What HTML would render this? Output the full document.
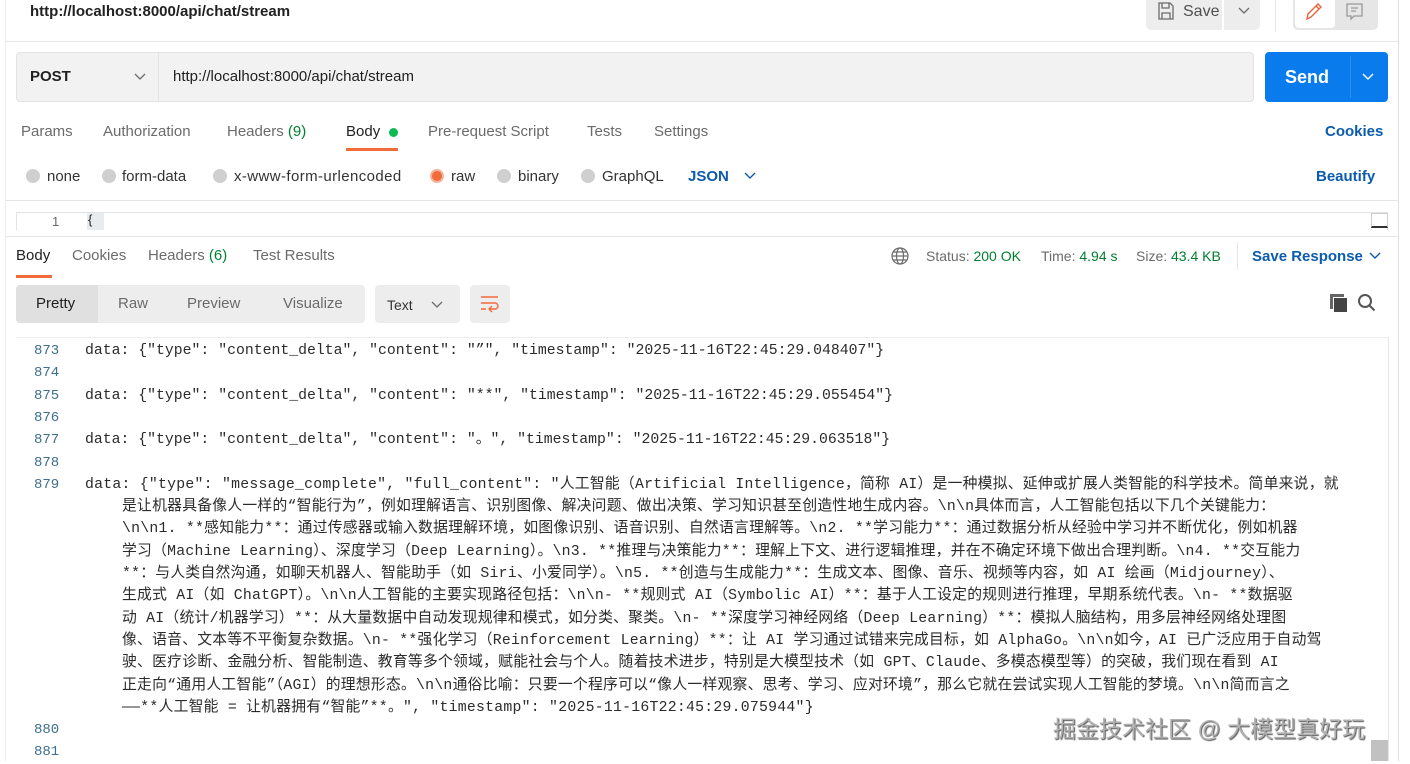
<!DOCTYPE html>
<html><head><meta charset="utf-8"><style>
*{margin:0;padding:0;box-sizing:border-box}
body{width:1410px;height:761px;overflow:hidden;background:#fff;font-family:"Liberation Sans","Noto Sans CJK SC",sans-serif;color:#212121;position:relative;font-size:15px}
.a{position:absolute;white-space:nowrap}
.g{color:#6b6b6b}
.blue{color:#0b5cad}
.gr{color:#007f31}
.radio{position:absolute;width:14px;height:14px;border-radius:50%;background:#cfcfcf;top:169px}
.code{position:absolute;left:0;top:340px;font-family:"Liberation Mono","Noto Sans CJK SC",monospace;font-size:14.8px;line-height:22.3px;color:#2b2b2b}
.ln{position:absolute;left:34px;width:28px;color:#3d6e8c;font-family:"Liberation Mono",monospace;font-size:14px}
.tx{position:absolute;left:85px;white-space:pre}
.tx2{position:absolute;left:122px;white-space:pre;letter-spacing:0.25px}
</style></head><body>
<div style="position:absolute;left:5px;top:0;width:1px;height:761px;background:#ececec"></div>
<div style="position:absolute;left:1398px;top:0;width:1px;height:761px;background:#e0e0e0"></div>
<div class="a" style="left:30px;top:3px;font-size:15px;font-weight:bold;color:#212121">http://localhost:8000/api/chat/stream</div>
<div style="position:absolute;left:1146px;top:0;width:114px;height:30px;background:#ededed;border-radius:0 0 5px 5px"></div>
<div style="position:absolute;left:1222px;top:0;width:2px;height:30px;background:#fff"></div>
<svg class="a" style="left:1157px;top:2px" width="18" height="18" viewBox="0 0 18 18" fill="none" stroke="#6b6b6b" stroke-width="1.3"><path d="M2 1h11l3 3v13H2z M5 1v5h7V1 M5 17v-6h8v6"/></svg>
<div class="a" style="left:1183px;top:3px;color:#505050;font-size:16px">Save</div>
<svg class="a" style="left:1238px;top:7px" width="12" height="8" fill="none" stroke="#6b6b6b" stroke-width="1.3"><path d="M1 1l5 5 5-5"/></svg>
<div style="position:absolute;left:1275px;top:0;width:1px;height:32px;background:#e6e6e6"></div>
<div style="position:absolute;left:1293px;top:0;width:85px;height:30px;background:#e6e6e6;border-radius:0 0 5px 5px"></div>
<div style="position:absolute;left:1295px;top:0;width:40px;height:28px;background:#fff;border-radius:0 0 4px 4px"></div>
<svg class="a" style="left:1304px;top:1px" width="20" height="20" fill="none" stroke="#e8663d" stroke-width="1.4"><path d="M3 18l1-5L14 3l3 3L7 16z M12 5l3 3"/></svg>
<svg class="a" style="left:1345px;top:2px" width="20" height="20" fill="none" stroke="#9a9a9a" stroke-width="1.3"><path d="M2 2h15v12H9l-3 3v-3H2z M6 6h7 M6 9h5"/></svg>
<div style="position:absolute;left:6px;top:41px;width:1392px;height:1px;background:#e6e6e6"></div>
<div style="position:absolute;left:16px;top:52px;width:1238px;height:50px;background:#f2f2f2;border:1px solid #e3e3e3;border-radius:4px"></div>
<div style="position:absolute;left:158px;top:53px;width:1px;height:48px;background:#e3e3e3"></div>
<div class="a" style="left:30px;top:68px;font-weight:bold;font-size:15px">POST</div>
<svg class="a" style="left:134px;top:73px" width="12" height="8" fill="none" stroke="#6b6b6b" stroke-width="1.3"><path d="M1 1l5 5 5-5"/></svg>
<div class="a" style="left:173px;top:68px;font-size:15px">http://localhost:8000/api/chat/stream</div>
<div style="position:absolute;left:1265px;top:52px;width:123px;height:50px;background:#097bed;border-radius:4px"></div>
<div style="position:absolute;left:1350px;top:56px;width:1px;height:42px;background:#2f8ff0"></div>
<div class="a" style="left:1285px;top:67px;font-size:18px;font-weight:bold;color:#fff">Send</div>
<svg class="a" style="left:1362px;top:73px" width="12" height="8" fill="none" stroke="#fff" stroke-width="1.4"><path d="M1 1l5 5 5-5"/></svg>
<div class="a g" style="left:21px;top:123px">Params</div>
<div class="a g" style="left:103px;top:123px">Authorization</div>
<div class="a g" style="left:227px;top:123px">Headers <span class="gr">(9)</span></div>
<div class="a" style="left:346px;top:123px;color:#212121">Body</div>
<div style="position:absolute;left:389px;top:128px;width:9px;height:9px;border-radius:50%;background:#0cbb52"></div>
<div style="position:absolute;left:346px;top:148px;width:52px;height:3px;background:#f26b3a"></div>
<div class="a g" style="left:428px;top:123px">Pre-request Script</div>
<div class="a g" style="left:587px;top:123px">Tests</div>
<div class="a g" style="left:654px;top:123px">Settings</div>
<div class="a blue" style="left:1325px;top:123px;font-weight:bold">Cookies</div>
<div class="radio" style="left:26px"></div><div class="a" style="left:47px;top:168px;color:#333">none</div>
<div class="radio" style="left:102px"></div><div class="a" style="left:122px;top:168px;color:#333">form-data</div>
<div class="radio" style="left:213px"></div><div class="a" style="left:234px;top:168px;color:#333;letter-spacing:0.4px">x-www-form-urlencoded</div>
<div class="radio" style="left:430px;background:#f26b3a;border:2px solid #f7b49a"></div><div class="a" style="left:451px;top:168px;color:#333">raw</div>
<div class="radio" style="left:497px"></div><div class="a" style="left:518px;top:168px;color:#333">binary</div>
<div class="radio" style="left:581px"></div><div class="a" style="left:602px;top:168px;color:#333">GraphQL</div>
<div class="a blue" style="left:688px;top:168px;font-weight:bold">JSON</div>
<svg class="a" style="left:744px;top:172px" width="12" height="8" fill="none" stroke="#0b5cad" stroke-width="1.4"><path d="M1 1l5 5 5-5"/></svg>
<div class="a blue" style="left:1316px;top:168px;font-weight:bold">Beautify</div>
<div style="position:absolute;left:6px;top:200px;width:1392px;height:1px;background:#e6e6e6"></div>
<div style="position:absolute;left:16px;top:212px;width:1372px;height:18px;border:1px solid #e3e3e3;border-bottom:none"></div>
<div class="a" style="left:52px;top:214px;font-size:13px;color:#666">1</div>
<div style="position:absolute;left:87px;top:213px;width:17px;height:17px;background:#e8ecef"></div>
<div class="a" style="left:88px;top:212px;font-size:13px">{</div>
<div style="position:absolute;left:1371px;top:213px;width:17px;height:15px;border:1px solid #ccc;border-bottom:2px solid #333"></div>
<div style="position:absolute;left:6px;top:236px;width:1392px;height:1px;background:#e6e6e6"></div>
<div class="a" style="left:16px;top:247px">Body</div>
<div style="position:absolute;left:16px;top:275px;width:36px;height:3px;background:#f26b3a"></div>
<div class="a g" style="left:72px;top:247px">Cookies</div>
<div class="a g" style="left:148px;top:247px">Headers <span class="gr">(6)</span></div>
<div class="a g" style="left:253px;top:247px">Test Results</div>
<svg class="a" style="left:891px;top:247px" width="18" height="18" fill="none" stroke="#6b6b6b" stroke-width="1.2"><circle cx="9" cy="9" r="8"/><ellipse cx="9" cy="9" rx="3.5" ry="8"/><path d="M1 9h16M2.5 5h13M2.5 13h13"/></svg>
<div class="a g" style="left:926px;top:248px;font-size:14px">Status: <span class="gr">200 OK</span></div>
<div class="a g" style="left:1041px;top:248px;font-size:14px">Time: <span class="gr">4.94 s</span></div>
<div class="a g" style="left:1136px;top:248px;font-size:14px">Size: <span class="gr">43.4 KB</span></div>
<div style="position:absolute;left:1237px;top:242px;width:1px;height:28px;background:#e6e6e6"></div>
<div class="a blue" style="left:1252px;top:248px;font-weight:bold">Save Response</div>
<svg class="a" style="left:1369px;top:252px" width="12" height="8" fill="none" stroke="#0b5cad" stroke-width="1.4"><path d="M1 1l5 5 5-5"/></svg>
<div style="position:absolute;left:16px;top:285px;width:349px;height:38px;background:#ededed;border-radius:4px"></div>
<div style="position:absolute;left:16px;top:285px;width:82px;height:38px;background:#e0e0e0;border-radius:4px 0 0 4px"></div>
<div class="a" style="left:36px;top:295px">Pretty</div>
<div class="a g" style="left:118px;top:295px">Raw</div>
<div class="a g" style="left:187px;top:295px">Preview</div>
<div class="a g" style="left:283px;top:295px">Visualize</div>
<div style="position:absolute;left:375px;top:285px;width:85px;height:38px;background:#ededed;border-radius:4px"></div>
<div class="a" style="left:387px;top:297px;font-size:14px;color:#333">Text</div>
<svg class="a" style="left:431px;top:301px" width="12" height="8" fill="none" stroke="#6b6b6b" stroke-width="1.3"><path d="M1 1l5 5 5-5"/></svg>
<div style="position:absolute;left:470px;top:285px;width:40px;height:38px;background:#ededed;border-radius:4px"></div>
<svg class="a" style="left:479px;top:294px" width="22" height="20" fill="none" stroke="#f26b3a" stroke-width="1.4"><path d="M2 3h17 M2 9h14a3 3 0 0 1 0 6h-5 M13 12l-3 3 3 3 M2 15h5"/></svg>
<svg class="a" style="left:1357px;top:293px" width="20" height="20" fill="none" stroke="#555" stroke-width="2"><circle cx="8" cy="8" r="6"/><path d="M12.5 12.5l5 5"/></svg>
<div style="position:absolute;left:1330px;top:294px;width:14px;height:15px;background:#666"></div>
<div style="position:absolute;left:1333px;top:297px;width:14px;height:15px;background:#444;border-left:1px solid #fff;border-top:1px solid #fff"></div>
<div style="position:absolute;left:16px;top:337px;width:1372px;height:1px;background:#ededed"></div>
<div class="code">
<div class="ln" style="top:0">873</div><div class="tx" style="top:0">data: {"type": "content_delta", "content": "”", "timestamp": "2025-11-16T22:45:29.048407"}</div>
<div class="ln" style="top:22.3px">874</div>
<div class="ln" style="top:44.6px">875</div><div class="tx" style="top:44.6px">data: {"type": "content_delta", "content": "**", "timestamp": "2025-11-16T22:45:29.055454"}</div>
<div class="ln" style="top:66.9px">876</div>
<div class="ln" style="top:89.2px">877</div><div class="tx" style="top:89.2px">data: {"type": "content_delta", "content": "。", "timestamp": "2025-11-16T22:45:29.063518"}</div>
<div class="ln" style="top:111.5px">878</div>
<div class="ln" style="top:133.8px">879</div><div class="tx" style="top:133.8px;letter-spacing:0.25px">data: {"type": "message_complete", "full_content": "人工智能（Artificial Intelligence，简称 AI）是一种模拟、延伸或扩展人类智能的科学技术。简单来说，就</div>
<div class="tx2" style="top:156.1px">是让机器具备像人一样的“智能行为”，例如理解语言、识别图像、解决问题、做出决策、学习知识甚至创造性地生成内容。\n\n具体而言，人工智能包括以下几个关键能力：</div>
<div class="tx2" style="top:178.4px">\n\n1. **感知能力**：通过传感器或输入数据理解环境，如图像识别、语音识别、自然语言理解等。\n2. **学习能力**：通过数据分析从经验中学习并不断优化，例如机器</div>
<div class="tx2" style="top:200.7px">学习（Machine Learning）、深度学习（Deep Learning）。\n3. **推理与决策能力**：理解上下文、进行逻辑推理，并在不确定环境下做出合理判断。\n4. **交互能力</div>
<div class="tx2" style="top:223px">**：与人类自然沟通，如聊天机器人、智能助手（如 Siri、小爱同学）。\n5. **创造与生成能力**：生成文本、图像、音乐、视频等内容，如 AI 绘画（Midjourney）、</div>
<div class="tx2" style="top:245.3px">生成式 AI（如 ChatGPT）。\n\n人工智能的主要实现路径包括：\n\n- **规则式 AI（Symbolic AI）**：基于人工设定的规则进行推理，早期系统代表。\n- **数据驱</div>
<div class="tx2" style="top:267.6px">动 AI（统计/机器学习）**：从大量数据中自动发现规律和模式，如分类、聚类。\n- **深度学习神经网络（Deep Learning）**：模拟人脑结构，用多层神经网络处理图</div>
<div class="tx2" style="top:289.9px">像、语音、文本等不平衡复杂数据。\n- **强化学习（Reinforcement Learning）**：让 AI 学习通过试错来完成目标，如 AlphaGo。\n\n如今，AI 已广泛应用于自动驾</div>
<div class="tx2" style="top:312.2px">驶、医疗诊断、金融分析、智能制造、教育等多个领域，赋能社会与个人。随着技术进步，特别是大模型技术（如 GPT、Claude、多模态模型等）的突破，我们现在看到 AI</div>
<div class="tx2" style="top:334.5px">正走向“通用人工智能”（AGI）的理想形态。\n\n通俗比喻：只要一个程序可以“像人一样观察、思考、学习、应对环境”，那么它就在尝试实现人工智能的梦境。\n\n简而言之</div>
<div class="tx2" style="top:356.8px">——**人工智能 = 让机器拥有“智能”**。", "timestamp": "2025-11-16T22:45:29.075944"}</div>
<div class="ln" style="top:379.1px">880</div>
<div class="ln" style="top:401.4px">881</div>
</div>
<div style="position:absolute;left:1388px;top:337px;width:1px;height:424px;background:#e6e6e6"></div>
<div style="position:absolute;left:1371px;top:740px;width:17px;height:21px;background:#c1c1c1"></div>
<div class="a" style="left:1053px;top:710px;font-size:23px;color:#b0b0b0;text-shadow:1px 1px 1px #555;font-family:'Liberation Sans','Noto Sans CJK SC',sans-serif">掘金技术社区 @ 大模型真好玩</div>
</body></html>
